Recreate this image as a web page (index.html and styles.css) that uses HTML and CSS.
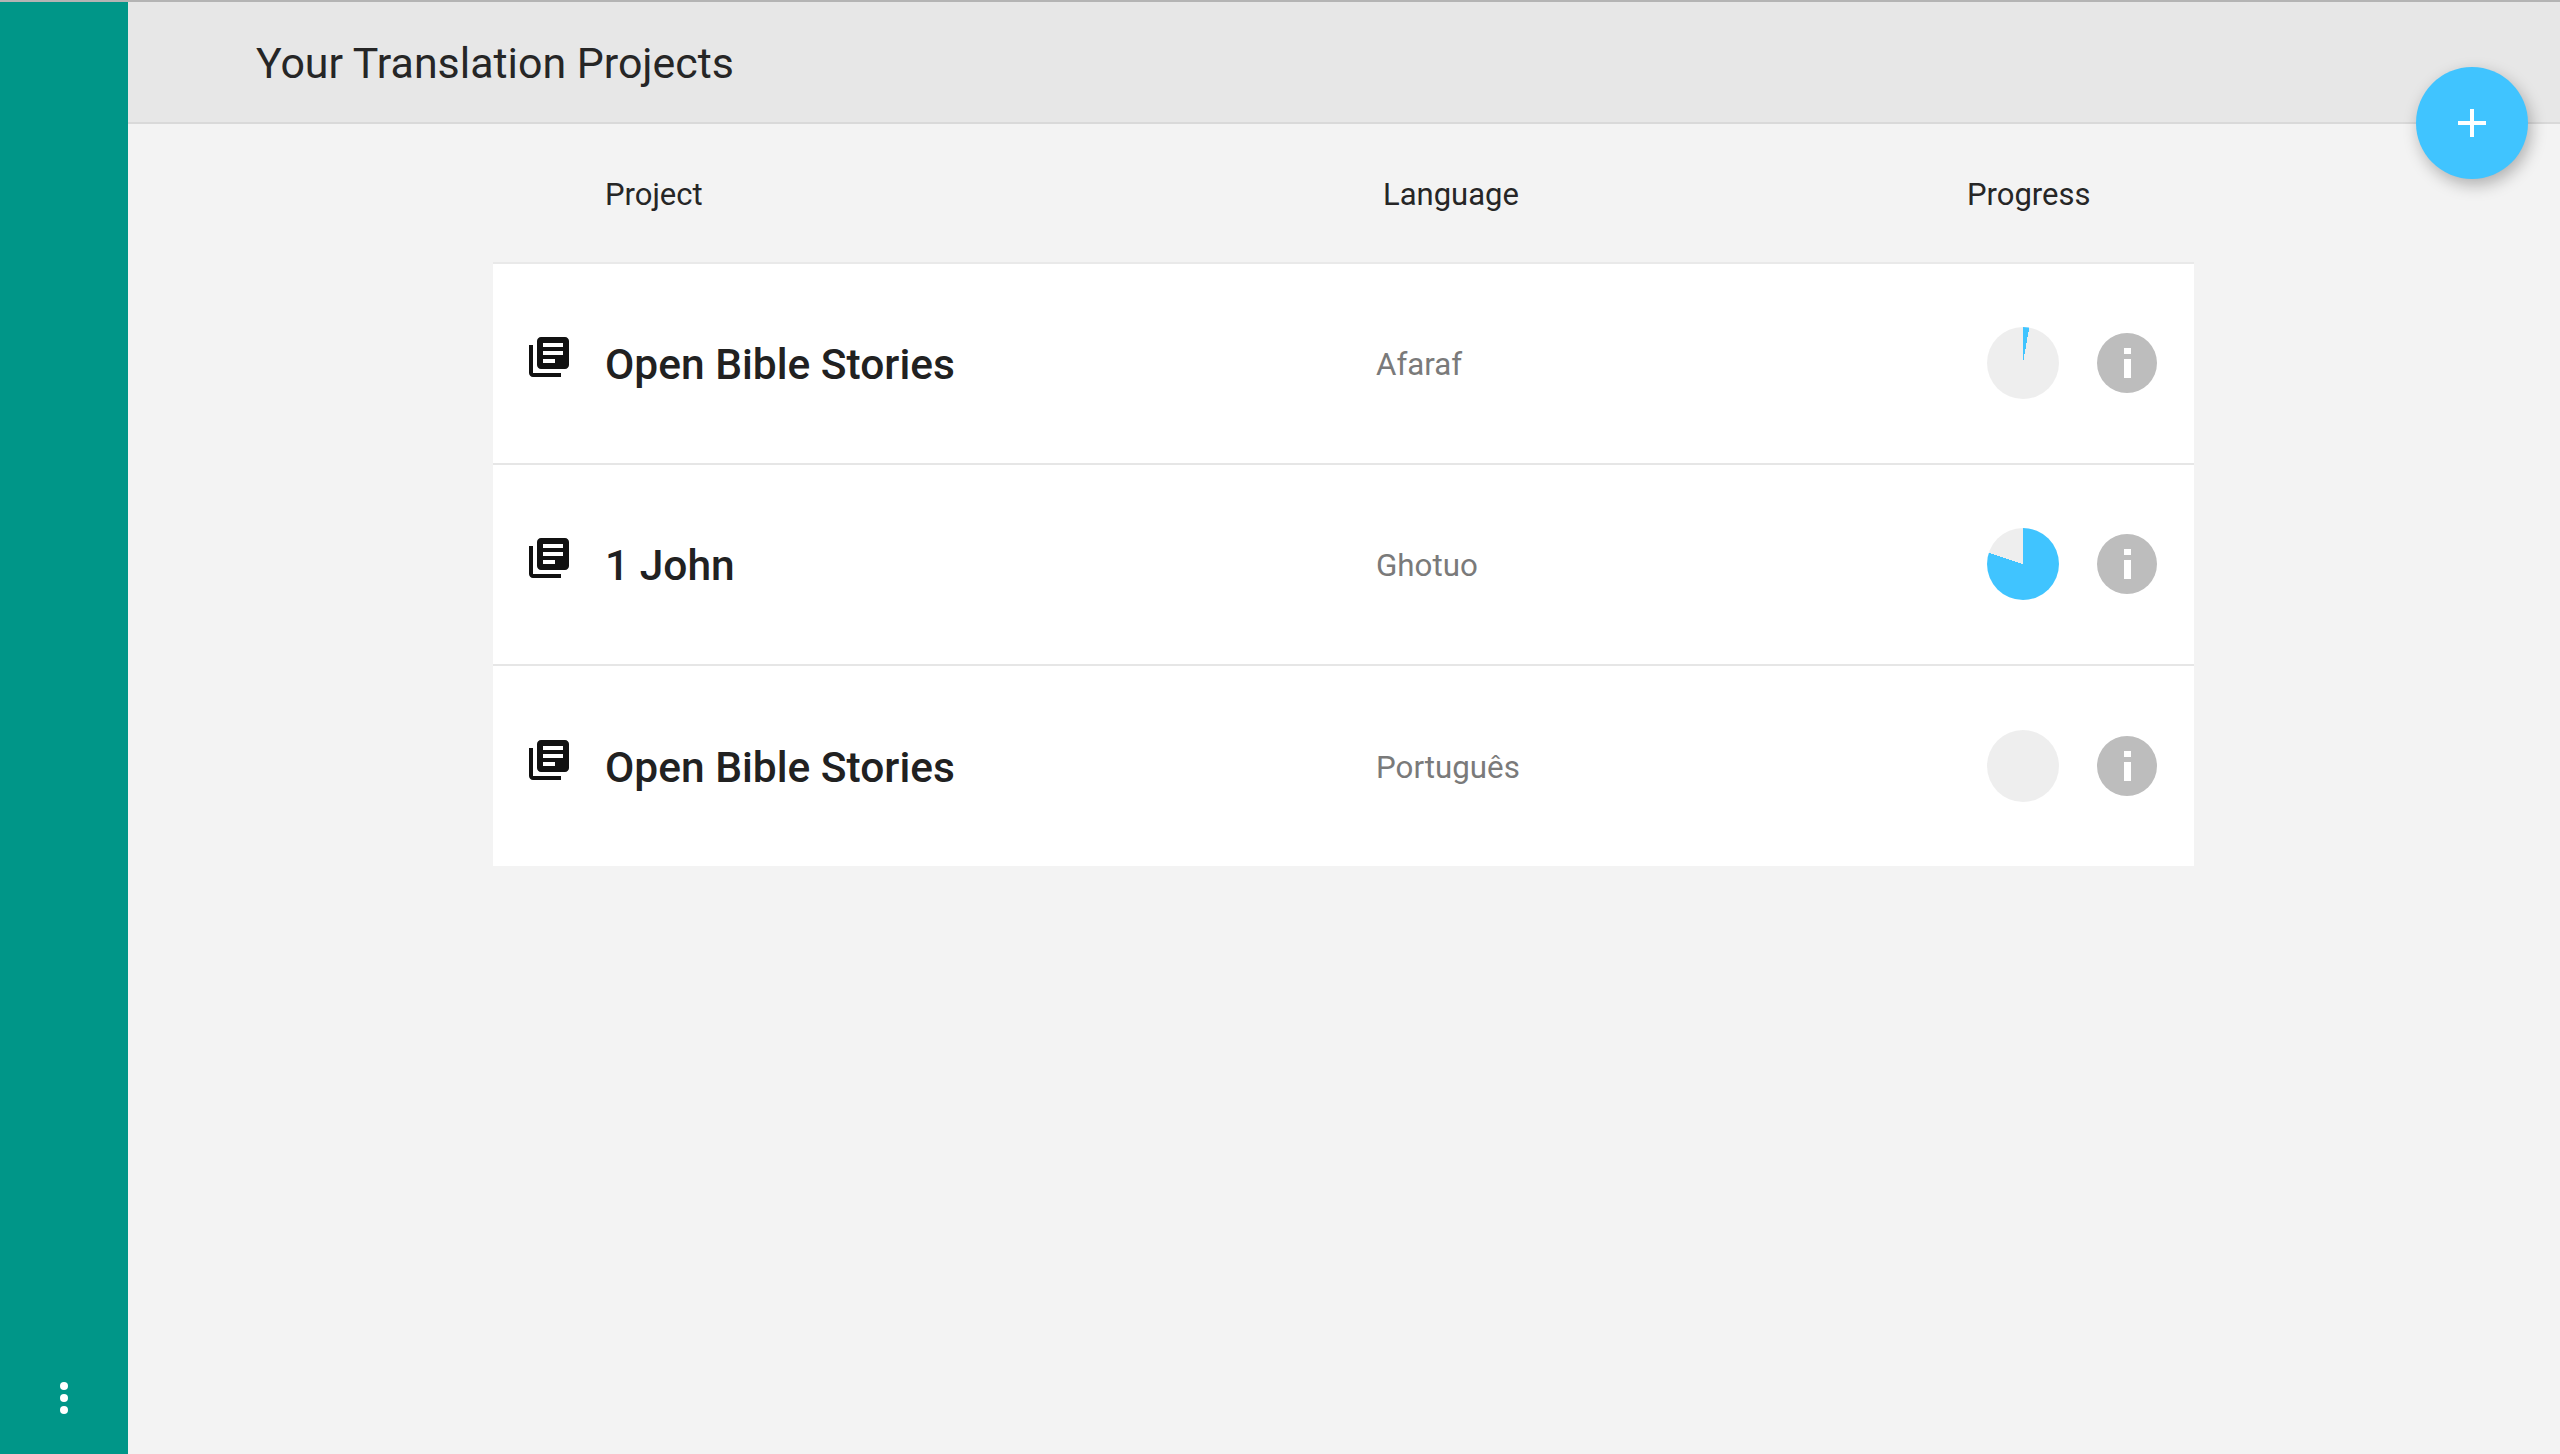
FILE: index.html
```html
<!DOCTYPE html>
<html lang="en">
<head>
<meta charset="utf-8">
<title>Your Translation Projects</title>
<link rel="stylesheet" href="styles.css">
</head>
<body>
<div class="app">
  <aside class="sidebar">
    <div class="more"><span class="dot"></span><span class="dot"></span><span class="dot"></span></div>
  </aside>
  <main class="main">
    <header class="header">
      <h1 class="title">Your Translation Projects</h1>
      <button class="fab" aria-label="Add project">
        <svg class="fab-icon" viewBox="0 0 28 28"><path d="M12 0h4v12h12v4H16v12h-4V16H0v-4h12z"/></svg>
      </button>
    </header>
    <section class="table">
      <div class="head">
        <span class="col-project">Project</span>
        <span class="col-language">Language</span>
        <span class="col-progress">Progress</span>
      </div>
      <div class="rows">
        <article class="row">
          <svg class="book" viewBox="0 0 24 24"><path d="M4 6H2v14c0 1.1.9 2 2 2h14v-2H4V6zm16-4H8c-1.1 0-2 .9-2 2v12c0 1.1.9 2 2 2h12c1.1 0 2-.9 2-2V4c0-1.1-.9-2-2-2zm-1 9H9V9h10v2zm-4 4H9v-2h6v2zm4-8H9V5h10v2z"/></svg>
          <span class="name">Open Bible Stories</span>
          <span class="language">Afaraf</span>
          <span class="pie" style="--deg:10deg"></span>
          <span class="info"><span class="info-dot"></span><span class="info-bar"></span></span>
        </article>
        <article class="row">
          <svg class="book" viewBox="0 0 24 24"><path d="M4 6H2v14c0 1.1.9 2 2 2h14v-2H4V6zm16-4H8c-1.1 0-2 .9-2 2v12c0 1.1.9 2 2 2h12c1.1 0 2-.9 2-2V4c0-1.1-.9-2-2-2zm-1 9H9V9h10v2zm-4 4H9v-2h6v2zm4-8H9V5h10v2z"/></svg>
          <span class="name">1 John</span>
          <span class="language">Ghotuo</span>
          <span class="pie" style="--deg:288deg"></span>
          <span class="info"><span class="info-dot"></span><span class="info-bar"></span></span>
        </article>
        <article class="row">
          <svg class="book" viewBox="0 0 24 24"><path d="M4 6H2v14c0 1.1.9 2 2 2h14v-2H4V6zm16-4H8c-1.1 0-2 .9-2 2v12c0 1.1.9 2 2 2h12c1.1 0 2-.9 2-2V4c0-1.1-.9-2-2-2zm-1 9H9V9h10v2zm-4 4H9v-2h6v2zm4-8H9V5h10v2z"/></svg>
          <span class="name">Open Bible Stories</span>
          <span class="language">Português</span>
          <span class="pie" style="--deg:0deg"></span>
          <span class="info"><span class="info-dot"></span><span class="info-bar"></span></span>
        </article>
      </div>
    </section>
  </main>
</div>
</body>
</html>
```
FILE: styles.css
```css
* { box-sizing: border-box; }
html, body { margin: 0; height: 100%; }
body {
  font-family: Roboto, "Liberation Sans", sans-serif;
  background: #f3f3f3;
  color: #212121;
  overflow: hidden;
}
.app {
  display: flex;
  height: 1454px;
  border-top: 2px solid #b4b4b4;
}
.sidebar {
  width: 128px;
  flex: none;
  background: #009688;
  display: flex;
  flex-direction: column;
  justify-content: flex-end;
  align-items: center;
  padding-bottom: 40px;
}
.more { display: flex; flex-direction: column; gap: 4px; }
.dot { width: 8px; height: 8px; border-radius: 50%; background: #fff; }
.main { flex: 1; display: flex; flex-direction: column; min-width: 0; }
.header {
  position: relative;
  height: 122px;
  flex: none;
  background: #e7e7e7;
  border-bottom: 2px solid #d9d9d9;
  display: flex;
  align-items: center;
  padding-left: 128px;
  padding-top: 2px;
}
.title { margin: 0; font-size: 42.9px; font-weight: 400; color: #262626; }
.fab {
  position: absolute;
  right: 32px;
  top: 65px;
  width: 112px;
  height: 112px;
  border: 0;
  padding: 0;
  border-radius: 50%;
  background: #40c4ff;
  box-shadow: 3px 6px 16px rgba(0, 0, 0, .28);
  display: flex;
  align-items: center;
  justify-content: center;
}
.fab-icon { width: 28px; height: 28px; fill: #fff; }
.table { width: 1701px; margin-left: 365px; }
.head {
  height: 140px;
  display: flex;
  align-items: center;
  padding-top: 2px;
  font-size: 31px;
  color: #262626;
  border-bottom: 2px solid #e9e9e9;
}
.col-project { margin-left: 112px; width: 778px; }
.col-language { width: 584px; }
.rows { background: #fff; }
.row {
  height: 201px;
  padding-bottom: 1px;
  display: flex;
  align-items: center;
  border-bottom: 2px solid #e6e6e6;
}
.row:last-child { height: 200px; padding-bottom: 0; border-bottom: 0; }
.book { width: 48px; height: 48px; flex: none; margin: 0 0 12px 32px; fill: #111; }
.name { margin-left: 32px; width: 771px; padding-top: 3px; font-size: 42.5px; font-weight: 500; color: #212121; }
.language { width: 611px; padding-top: 3px; font-size: 31.3px; color: #7a7a7a; }
.pie {
  width: 72px;
  height: 72px;
  flex: none;
  border-radius: 50%;
  background: conic-gradient(#40c4ff 0 var(--deg), #eeeeee var(--deg) 360deg);
}
.info {
  width: 60px;
  height: 60px;
  flex: none;
  margin-left: 38px;
  border-radius: 50%;
  background: #bdbdbd;
  display: flex;
  flex-direction: column;
  align-items: center;
  justify-content: center;
  gap: 5px;
}
.info-dot { width: 7px; height: 6px; background: #fff; }
.info-bar { width: 7px; height: 19px; background: #fff; }
```
